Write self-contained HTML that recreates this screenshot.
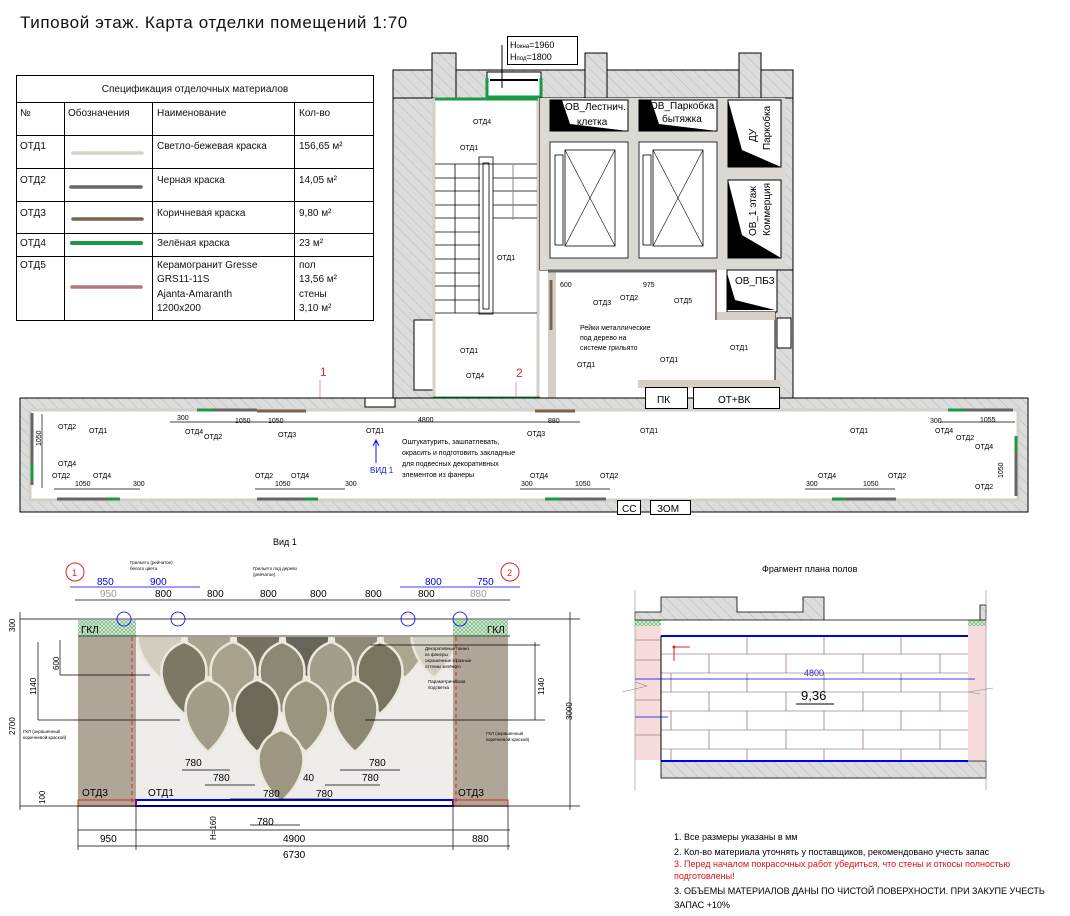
<!DOCTYPE html>
<html><head><meta charset="utf-8">
<style>
html,body{margin:0;padding:0;background:#fff;}
svg{display:block;}
text{font-family:"Liberation Sans","DejaVu Sans",sans-serif;}
</style></head>
<body>
<svg width="1070" height="916" viewBox="0 0 1070 916" xmlns="http://www.w3.org/2000/svg">
<defs>
<pattern id="h" width="8" height="8" patternUnits="userSpaceOnUse" patternTransform="rotate(-45)">
<rect width="8" height="8" fill="#dcdcdc"/><line x1="0" y1="0" x2="0" y2="8" stroke="#a8a8a8" stroke-width="0.7"/>
</pattern>
<pattern id="g" width="4" height="4" patternUnits="userSpaceOnUse">
<rect width="4" height="4" fill="#cfe8cf"/><path d="M0 0L4 4M4 0L0 4" stroke="#4a9a5a" stroke-width="0.5"/>
</pattern>
<clipPath id="lc"><rect x="136" y="637" width="317" height="169"/></clipPath>
<path id="L" d="M0 0C30 10 30 45 0 72C-30 45-30 10 0 0Z"/>
</defs>

<text x="20" y="28" font-size="17" fill="#111" letter-spacing="0.6">Типовой этаж. Карта отделки помещений 1:70</text>

<!-- TABLE -->
<g stroke="#000" stroke-width="1" fill="none">
<rect x="16.5" y="75.5" width="357" height="245"/>
<line x1="16" y1="102.5" x2="373" y2="102.5"/>
<line x1="16" y1="135.5" x2="373" y2="135.5"/>
<line x1="16" y1="168.5" x2="373" y2="168.5"/>
<line x1="16" y1="201.5" x2="373" y2="201.5"/>
<line x1="16" y1="233.5" x2="373" y2="233.5"/>
<line x1="16" y1="256.5" x2="373" y2="256.5"/>
<line x1="64.5" y1="102" x2="64.5" y2="320"/>
<line x1="152.5" y1="102" x2="152.5" y2="320"/>
<line x1="294.5" y1="102" x2="294.5" y2="320"/>
</g>
<g font-size="10" fill="#111">
<text x="195" y="92" text-anchor="middle">Спецификация отделочных материалов</text>
<text x="20" y="116">№</text><text x="68" y="116">Обозначения</text><text x="157" y="116">Наименование</text><text x="299" y="116">Кол-во</text>
<text x="20" y="149">ОТД1</text><text x="157" y="149">Светло-бежевая краска</text><text x="299" y="149">156,65 м²</text>
<text x="20" y="183">ОТД2</text><text x="157" y="183">Черная краска</text><text x="299" y="183">14,05 м²</text>
<text x="20" y="216">ОТД3</text><text x="157" y="216">Коричневая краска</text><text x="299" y="216">9,80 м²</text>
<text x="20" y="246">ОТД4</text><text x="157" y="246">Зелёная краска</text><text x="299" y="246">23 м²</text>
<text x="20" y="268">ОТД5</text><text x="157" y="268">Керамогранит Gresse</text><text x="157" y="282">GRS11-11S</text><text x="157" y="297">Ajanta-Amaranth</text><text x="157" y="311">1200x200</text>
<text x="299" y="268">пол</text><text x="299" y="282">13,56 м²</text><text x="299" y="297">стены</text><text x="299" y="311">3,10 м²</text>
</g>
<g stroke-linecap="round" stroke-width="3.5">
<line x1="73" y1="153" x2="142" y2="153" stroke="#d8d2cc"/>
<line x1="71" y1="187" x2="141" y2="187" stroke="#666"/>
<line x1="73" y1="219" x2="142" y2="219" stroke="#7a6450"/>
<line x1="72" y1="243" x2="141" y2="243" stroke="#1a9a45" stroke-width="4"/>
<line x1="72" y1="287" x2="141" y2="287" stroke="#b07878"/>
</g>

<!-- TOP BUILDING -->
<rect x="393" y="70" width="400" height="28" fill="url(#h)" stroke="#000"/>
<rect x="432" y="53" width="24" height="45" fill="url(#h)" stroke="#000"/>
<rect x="585" y="53" width="22" height="45" fill="url(#h)" stroke="#000"/>
<rect x="739" y="53" width="22" height="45" fill="url(#h)" stroke="#000"/>
<rect x="487" y="72" width="54" height="26" fill="#fff" stroke="#000"/>
<line x1="490" y1="80" x2="538" y2="80" stroke="#000" stroke-width="2"/>
<path d="M487 78V97H541V78" fill="none" stroke="#1a9a45" stroke-width="3"/>
<rect x="507.5" y="36.5" width="70" height="28" fill="#fff" stroke="#000"/>
<text x="510" y="48" font-size="9">H<tspan font-size="6">окна</tspan>=1960</text>
<text x="510" y="60" font-size="9">H<tspan font-size="6">под</tspan>=1800</text>
<line x1="502" y1="45" x2="502" y2="88" stroke="#000"/>
<rect x="393" y="98" width="42" height="300" fill="url(#h)" stroke="#000"/>
<rect x="414" y="320" width="20" height="70" fill="#fff" stroke="#000"/>
<rect x="435" y="98" width="104" height="300" fill="#fff"/>
<line x1="434" y1="98" x2="434" y2="398" stroke="#d5cfc8" stroke-width="3"/>
<line x1="538" y1="98" x2="538" y2="398" stroke="#d5cfc8" stroke-width="3"/>
<line x1="435" y1="99" x2="538" y2="99" stroke="#1a9a45" stroke-width="3"/>
<line x1="433" y1="398" x2="540" y2="398" stroke="#1a9a45" stroke-width="3"/>
<g stroke="#000" stroke-width="0.8">
<line x1="435" y1="164" x2="537" y2="164"/><line x1="435" y1="178" x2="480" y2="178"/><line x1="435" y1="191" x2="480" y2="191"/><line x1="435" y1="205" x2="480" y2="205"/><line x1="435" y1="218" x2="480" y2="218"/><line x1="435" y1="232" x2="480" y2="232"/><line x1="435" y1="245" x2="480" y2="245"/><line x1="435" y1="259" x2="480" y2="259"/><line x1="435" y1="273" x2="480" y2="273"/><line x1="435" y1="286" x2="480" y2="286"/><line x1="435" y1="300" x2="480" y2="300"/><line x1="435" y1="313" x2="537" y2="313"/>
<line x1="455" y1="164" x2="455" y2="313"/>
<rect x="479" y="157" width="14" height="157" fill="none"/><rect x="483" y="163" width="6" height="146" fill="none"/>
<line x1="493" y1="178" x2="537" y2="178"/><line x1="493" y1="191" x2="537" y2="191"/><line x1="493" y1="205" x2="537" y2="205"/><line x1="493" y1="218" x2="537" y2="218"/>
</g>
<line x1="513" y1="165" x2="513" y2="220" stroke="#888"/>
<rect x="540" y="98" width="253" height="172" fill="url(#h)" stroke="#000"/>
<rect x="540" y="98" width="245" height="172" fill="#dcd8d3"/>
<rect x="550" y="100" width="78" height="31" fill="#fff" stroke="#000"/>
<path d="M550 100L562 100L570 124L628 131L550 131Z" fill="#000"/>
<text x="565" y="110" font-size="10">ОВ_Лестнич.</text><text x="577" y="125" font-size="10">клетка</text>
<rect x="639" y="100" width="78" height="31" fill="#fff" stroke="#000"/>
<path d="M639 100L651 100L659 124L717 131L639 131Z" fill="#000"/>
<text x="650" y="109" font-size="10">ОВ_Паркобка</text><text x="662" y="122" font-size="10">бытяжка</text>
<rect x="728" y="100" width="53" height="67" fill="#fff" stroke="#000"/>
<path d="M728 100L742 150L781 167L728 167Z" fill="#000"/>
<text transform="translate(756,142) rotate(-90)" font-size="10">ДУ</text><text transform="translate(770,150) rotate(-90)" font-size="10">Паркобка</text>
<rect x="728" y="180" width="53" height="78" fill="#fff" stroke="#000"/>
<path d="M728 180L742 235L781 258L728 258Z" fill="#000"/>
<text transform="translate(756,236) rotate(-90)" font-size="10">ОВ_1 этаж</text><text transform="translate(770,236) rotate(-90)" font-size="10">Коммерция</text>
<g fill="#fff" stroke="#000" stroke-width="0.8">
<rect x="550" y="142" width="78" height="116"/><rect x="555" y="155" width="8" height="90"/><rect x="565" y="150" width="50" height="96"/>
<rect x="639" y="142" width="78" height="116"/><rect x="643" y="155" width="8" height="90"/><rect x="653" y="150" width="50" height="96"/>
</g>
<path d="M565 150L615 246M615 150L565 246M653 150L703 246M703 150L653 246" stroke="#000" stroke-width="0.6"/>
<rect x="548" y="270" width="230" height="128" fill="#fff"/>
<rect x="548" y="270" width="8" height="128" fill="#d5cfc8"/>
<rect x="775" y="270" width="18" height="128" fill="url(#h)" stroke="#000"/>
<rect x="727" y="270" width="50" height="42" fill="#fff" stroke="#000"/>
<path d="M727 273L735 300L775 310L727 310Z" fill="#000"/>
<text x="735" y="284" font-size="10">ОВ_ПБЗ</text>
<rect x="717" y="312" width="58" height="8" fill="#d5cfc8"/>
<rect x="777" y="318" width="14" height="30" fill="#fff" stroke="#000"/>
<line x1="548" y1="271" x2="717" y2="271" stroke="#666" stroke-width="3"/>
<line x1="716" y1="272" x2="716" y2="320" stroke="#b07070" stroke-width="2"/>
<line x1="551" y1="280" x2="551" y2="330" stroke="#7a6450" stroke-width="3"/>
<rect x="638" y="380" width="142" height="8" fill="#d5cfc8"/>
<g font-size="7">
<text x="560" y="287">600</text><text x="643" y="287">975</text>
<text x="593" y="305">ОТД3</text><text x="620" y="300">ОТД2</text><text x="674" y="303">ОТД5</text>
<text x="580" y="330">Рейки металлические</text><text x="580" y="340">под дерево на</text><text x="580" y="350">системе грильято</text>
<text x="730" y="350">ОТД1</text><text x="577" y="367">ОТД1</text><text x="660" y="362">ОТД1</text>
<text x="473" y="124">ОТД4</text><text x="460" y="150">ОТД1</text><text x="497" y="260">ОТД1</text><text x="460" y="353">ОТД1</text><text x="466" y="378">ОТД4</text>
</g>
<text x="516" y="377" font-size="12" fill="#d03030">2</text>
<text x="320" y="376" font-size="12" fill="#d03030">1</text>
<path d="M320 380V405M516 382V410" stroke="#e08080" stroke-width="0.8"/>

<!-- CORRIDOR -->
<rect x="20" y="398" width="1008" height="114" fill="url(#h)" stroke="#000"/>
<rect x="30" y="410" width="988" height="90" fill="#fff"/>
<path d="M30 410H1018V500H30Z" fill="none" stroke="#d5cfc8" stroke-width="3"/>
<rect x="365" y="398" width="30" height="9" fill="#fff" stroke="#000"/>
<rect x="645.5" y="387.5" width="42" height="21" fill="#fff" stroke="#000"/>
<text x="657" y="403" font-size="10">ПК</text>
<rect x="693.5" y="387.5" width="86" height="21" fill="#fff" stroke="#000"/>
<text x="718" y="403" font-size="10">ОТ+ВК</text>
<line x1="32" y1="413" x2="32" y2="485" stroke="#666" stroke-width="3"/>
<line x1="32" y1="463" x2="32" y2="480" stroke="#1a9a45" stroke-width="3"/>
<line x1="1016" y1="436" x2="1016" y2="496" stroke="#666" stroke-width="3"/>
<line x1="1016" y1="436" x2="1016" y2="452" stroke="#1a9a45" stroke-width="3"/>
<g stroke-width="3">
<line x1="205" y1="410" x2="257" y2="410" stroke="#666"/><line x1="197" y1="410" x2="213" y2="410" stroke="#1a9a45"/>
<line x1="257" y1="411" x2="306" y2="411" stroke="#7a6450"/>
<line x1="535" y1="411" x2="575" y2="411" stroke="#7a6450"/>
<line x1="950" y1="410" x2="1013" y2="410" stroke="#666"/><line x1="948" y1="410" x2="963" y2="410" stroke="#1a9a45"/>
<line x1="57" y1="499" x2="107" y2="499" stroke="#666"/><line x1="107" y1="499" x2="120" y2="499" stroke="#1a9a45"/>
<line x1="257" y1="499" x2="305" y2="499" stroke="#666"/><line x1="305" y1="499" x2="318" y2="499" stroke="#1a9a45"/>
<line x1="545" y1="499" x2="560" y2="499" stroke="#1a9a45"/><line x1="560" y1="499" x2="606" y2="499" stroke="#666"/>
<line x1="832" y1="499" x2="846" y2="499" stroke="#1a9a45"/><line x1="846" y1="499" x2="896" y2="499" stroke="#666"/>
</g>
<rect x="617.5" y="500.5" width="23" height="14" fill="#fff" stroke="#000"/><text x="622" y="512" font-size="10">СС</text>
<rect x="650.5" y="500.5" width="40" height="14" fill="#fff" stroke="#000"/><text x="657" y="512" font-size="10">ЗОМ</text>
<g stroke="#000" stroke-width="0.7">
<line x1="170" y1="422" x2="580" y2="422"/><line x1="940" y1="422" x2="1015" y2="422"/>
<line x1="54" y1="489" x2="140" y2="489"/><line x1="255" y1="489" x2="345" y2="489"/><line x1="520" y1="489" x2="610" y2="489"/><line x1="805" y1="489" x2="895" y2="489"/>
<line x1="42" y1="414" x2="42" y2="488"/>
</g>
<g font-size="7">
<text x="58" y="429">ОТД2</text><text x="89" y="433">ОТД1</text><text x="177" y="420">300</text><text x="185" y="434">ОТД4</text><text x="204" y="439">ОТД2</text><text x="235" y="423">1050</text><text x="268" y="423">1050</text><text x="278" y="437">ОТД3</text><text x="418" y="422">4800</text><text x="366" y="433">ОТД1</text>
<text x="548" y="423">880</text><text x="527" y="436">ОТД3</text><text x="640" y="433">ОТД1</text><text x="850" y="433">ОТД1</text><text x="930" y="423">300</text><text x="935" y="433">ОТД4</text><text x="956" y="440">ОТД2</text><text x="980" y="422">1055</text><text x="975" y="449">ОТД4</text><text x="975" y="489">ОТД2</text>
<text x="58" y="466">ОТД4</text><text x="52" y="478">ОТД2</text><text x="93" y="478">ОТД4</text><text x="75" y="486">1050</text><text x="133" y="486">300</text>
<text x="255" y="478">ОТД2</text><text x="291" y="478">ОТД4</text><text x="275" y="486">1050</text><text x="345" y="486">300</text>
<text x="530" y="478">ОТД4</text><text x="600" y="478">ОТД2</text><text x="521" y="486">300</text><text x="575" y="486">1050</text>
<text x="818" y="478">ОТД4</text><text x="888" y="478">ОТД2</text><text x="806" y="486">300</text><text x="863" y="486">1050</text>
<text x="402" y="444">Оштукатурить, зашпатлевать,</text><text x="402" y="455">окрасить и подготовить закладные</text><text x="402" y="466">для подвесных декоративных</text><text x="402" y="477">элементов из фанеры</text>
</g>
<text transform="translate(41,446) rotate(-90)" font-size="7">1050</text>
<text transform="translate(1003,478) rotate(-90)" font-size="7">1050</text>
<line x1="376" y1="440" x2="376" y2="463" stroke="#1010e0"/><path d="M373 446L376 440L379 446" fill="none" stroke="#1010e0"/>
<text x="370" y="473" font-size="8" fill="#1010e0">ВИД 1</text>

<!-- VIEW 1 -->
<text x="273" y="545" font-size="9">Вид 1</text>
<rect x="78" y="620" width="58" height="17" fill="url(#g)"/>
<rect x="453" y="620" width="55" height="17" fill="url(#g)"/>
<text x="81" y="633" font-size="10">ГКЛ</text><text x="487" y="633" font-size="10">ГКЛ</text>
<rect x="78" y="637" width="58" height="170" fill="#b0a697"/>
<rect x="453" y="637" width="55" height="170" fill="#b0a697"/>
<rect x="136" y="637" width="317" height="163" fill="#efedea"/>
<g stroke="#ede8dc" stroke-width="2.5" clip-path="url(#lc)">
<use href="#L" fill="#d2cdbf" transform="translate(160,606)"/>
<use href="#L" fill="#aaa48f" transform="translate(209,606)"/>
<use href="#L" fill="#757060" transform="translate(258,606)"/>
<use href="#L" fill="#68645a" transform="translate(307,606)"/>
<use href="#L" fill="#8f8a76" transform="translate(356,606)"/>
<use href="#L" fill="#aca690" transform="translate(405,606)"/>
<use href="#L" fill="#d3cfc2" transform="translate(434,606)"/>
<use href="#L" fill="#7d7866" transform="translate(184,642)"/>
<use href="#L" fill="#a7a18d" transform="translate(233,642)"/>
<use href="#L" fill="#8d8875" transform="translate(282,642)"/>
<use href="#L" fill="#a39e8b" transform="translate(331,642)"/>
<use href="#L" fill="#79745f" transform="translate(380,642)"/>
<use href="#L" fill="#a29d89" transform="translate(208,680)"/>
<use href="#L" fill="#6d6959" transform="translate(257,680)"/>
<use href="#L" fill="#9a957f" transform="translate(306,680)"/>
<use href="#L" fill="#8d8873" transform="translate(355,680)"/>
<use href="#L" fill="#9c9683" transform="translate(281,730)"/>
</g>
<rect x="136" y="800" width="317" height="6" fill="#fff" stroke="#0000ee" stroke-width="2"/>
<rect x="78" y="800" width="58" height="6" fill="none" stroke="#e02020"/>
<rect x="453" y="800" width="55" height="6" fill="none" stroke="#e02020"/>
<path d="M132 637V806M456 637V806" stroke="#e02020" stroke-dasharray="4 3"/>
<g stroke="#000" stroke-width="0.7" fill="none">
<line x1="20" y1="619" x2="580" y2="619"/><line x1="78" y1="636" x2="510" y2="636"/>
<line x1="20" y1="806" x2="580" y2="806"/>
<line x1="20" y1="612" x2="20" y2="810"/><line x1="38" y1="642" x2="38" y2="720"/><line x1="60" y1="640" x2="60" y2="675"/>
<line x1="570" y1="612" x2="570" y2="810"/><line x1="535" y1="642" x2="535" y2="720"/>
<line x1="75" y1="600" x2="510" y2="600"/>
<line x1="78" y1="830" x2="510" y2="830"/><line x1="78" y1="846" x2="510" y2="846"/>
<line x1="78" y1="806" x2="78" y2="850"/><line x1="136" y1="806" x2="136" y2="850"/><line x1="453" y1="806" x2="453" y2="850"/><line x1="508" y1="806" x2="508" y2="850"/>
<line x1="182" y1="770" x2="230" y2="770"/><line x1="205" y1="785" x2="255" y2="785"/><line x1="230" y1="799" x2="330" y2="799"/><line x1="250" y1="825" x2="300" y2="825"/>
<line x1="340" y1="770" x2="400" y2="770"/><line x1="325" y1="785" x2="380" y2="785"/>
<line x1="38" y1="720" x2="180" y2="720"/><line x1="60" y1="675" x2="150" y2="675"/>
<line x1="365" y1="720" x2="545" y2="720"/><line x1="370" y1="645" x2="540" y2="645"/>
</g>
<circle cx="75" cy="572" r="9" fill="none" stroke="#e02020"/><text x="72" y="576" font-size="9" fill="#e02020">1</text>
<circle cx="510" cy="572" r="9" fill="none" stroke="#e02020"/><text x="507" y="576" font-size="9" fill="#e02020">2</text>
<g fill="none" stroke="#0000ee" stroke-width="0.8">
<line x1="70" y1="587" x2="200" y2="587"/><line x1="400" y1="587" x2="520" y2="587"/>
<circle cx="124" cy="619" r="7"/><circle cx="178" cy="619" r="7"/><circle cx="408" cy="619" r="7"/><circle cx="460" cy="619" r="7"/>
</g>
<g font-size="10" fill="#0000ee"><text x="97" y="585">850</text><text x="150" y="585">900</text><text x="425" y="585">800</text><text x="477" y="585">750</text></g>
<g font-size="10"><text x="100" y="597" fill="#999">950</text><text x="155" y="597">800</text><text x="207" y="597">800</text><text x="260" y="597">800</text><text x="310" y="597">800</text><text x="365" y="597">800</text><text x="418" y="597">800</text><text x="470" y="597" fill="#999">880</text>
<text x="82" y="796">ОТД3</text><text x="148" y="796">ОТД1</text><text x="458" y="796">ОТД3</text>
<text x="185" y="766">780</text><text x="213" y="781">780</text><text x="263" y="797">780</text><text x="316" y="797">780</text><text x="369" y="766">780</text><text x="362" y="781">780</text><text x="257" y="825">780</text><text x="303" y="781">40</text>
<text x="100" y="842">950</text><text x="283" y="842">4900</text><text x="472" y="842">880</text><text x="283" y="858">6730</text></g>
<g font-size="8"><text transform="translate(59,670) rotate(-90)">600</text><text transform="translate(36,695) rotate(-90)">1140</text><text transform="translate(15,735) rotate(-90)">2700</text><text transform="translate(15,632) rotate(-90)">300</text><text transform="translate(45,804) rotate(-90)">100</text><text transform="translate(544,695) rotate(-90)">1140</text><text transform="translate(572,720) rotate(-90)">3000</text><text transform="translate(216,840) rotate(-90)">H=160</text></g>
<g font-size="4.5"><text x="130" y="564">Грильято (рейчатое)</text><text x="130" y="570">белого цвета</text><text x="253" y="570">Грильято под дерево</text><text x="253" y="576">(рейчатое)</text>
<text x="23" y="733">ГКЛ (окрашенный</text><text x="23" y="739">коричневой краской)</text><text x="486" y="735">ГКЛ (окрашенный</text><text x="486" y="741">коричневой краской)</text>
<text x="425" y="650">Декоративные панно</text><text x="425" y="656">из фанеры</text><text x="425" y="662">окрашенные в разные</text><text x="425" y="668">оттенки зелёного</text><text x="428" y="683">Параметрическая</text><text x="428" y="689">подсветка</text></g>

<!-- FLOOR FRAGMENT -->
<text x="762" y="572" font-size="9">Фрагмент плана полов</text>
<rect x="635" y="620" width="26" height="140" fill="#f6dcdc"/>
<rect x="968" y="620" width="18" height="140" fill="#f6dcdc"/>
<rect x="635" y="620" width="26" height="6" fill="url(#g)"/><rect x="968" y="620" width="18" height="6" fill="url(#g)"/>
<path d="M635 612H661V597H737V612H803V597H824V620H980V605H986V620H635Z" fill="url(#h)" stroke="#000" stroke-width="0.8"/>
<rect x="661" y="761" width="325" height="17" fill="url(#h)" stroke="#000" stroke-width="0.8"/>
<rect x="661" y="636" width="307" height="125" fill="#fff"/>
<g stroke="#7a5050" stroke-width="0.6">
<line x1="661" y1="654" x2="968" y2="654"/><line x1="661" y1="673" x2="968" y2="673"/><line x1="661" y1="692" x2="968" y2="692"/><line x1="661" y1="711" x2="968" y2="711"/><line x1="661" y1="730" x2="968" y2="730"/><line x1="661" y1="749" x2="968" y2="749"/>
<line x1="747" y1="636" x2="747" y2="654"/><line x1="824" y1="636" x2="824" y2="654"/><line x1="901" y1="636" x2="901" y2="654"/>
<line x1="709" y1="654" x2="709" y2="673"/><line x1="786" y1="654" x2="786" y2="673"/><line x1="863" y1="654" x2="863" y2="673"/><line x1="940" y1="654" x2="940" y2="673"/>
<line x1="671" y1="673" x2="671" y2="692"/><line x1="747" y1="673" x2="747" y2="692"/><line x1="824" y1="673" x2="824" y2="692"/><line x1="901" y1="673" x2="901" y2="692"/>
<line x1="709" y1="692" x2="709" y2="711"/><line x1="786" y1="692" x2="786" y2="711"/><line x1="863" y1="692" x2="863" y2="711"/><line x1="940" y1="692" x2="940" y2="711"/>
<line x1="671" y1="711" x2="671" y2="730"/><line x1="747" y1="711" x2="747" y2="730"/><line x1="824" y1="711" x2="824" y2="730"/><line x1="901" y1="711" x2="901" y2="730"/>
<line x1="709" y1="730" x2="709" y2="749"/><line x1="786" y1="730" x2="786" y2="749"/><line x1="863" y1="730" x2="863" y2="749"/><line x1="940" y1="730" x2="940" y2="749"/>
<line x1="671" y1="749" x2="671" y2="761"/><line x1="747" y1="749" x2="747" y2="761"/><line x1="824" y1="749" x2="824" y2="761"/><line x1="901" y1="749" x2="901" y2="761"/>
<line x1="635" y1="640" x2="661" y2="640"/><line x1="635" y1="660" x2="661" y2="660"/><line x1="635" y1="700" x2="661" y2="700"/><line x1="635" y1="735" x2="661" y2="735"/>
</g>
<path d="M661 636H968M661 761H968" stroke="#0000ee" stroke-width="2"/>
<path d="M661 636V761" stroke="#000"/>
<path d="M635 679H975M635 717H668" stroke="#0000ee" stroke-width="0.8"/>
<path d="M622 692L647 686L635 682" fill="none" stroke="#888" stroke-width="0.6"/>
<path d="M993 688L968 692L980 694" fill="none" stroke="#888" stroke-width="0.6"/>
<text x="804" y="676" font-size="9" fill="#3030c0">4800</text>
<text x="801" y="700" font-size="13">9,36</text><line x1="796" y1="704" x2="834" y2="704" stroke="#000"/>
<path d="M674 647H690M674 647V661" stroke="#e02020"/><circle cx="674" cy="647" r="1.5" fill="#e02020"/>
<path d="M635 590V790M986 590V790" stroke="#888" stroke-width="0.6"/>

<!-- NOTES -->
<g font-size="9">
<text x="674" y="840">1. Все размеры указаны в мм</text>
<text x="674" y="855">2. Кол-во материала уточнять у поставщиков, рекомендовано учесть запас</text>
<text x="674" y="867" fill="#e01010">3. Перед началом покрасочных работ убедиться, что стены и откосы полностью</text>
<text x="674" y="879" fill="#e01010">подготовлены!</text>
<text x="674" y="894">3. ОБЪЕМЫ МАТЕРИАЛОВ ДАНЫ ПО ЧИСТОЙ ПОВЕРХНОСТИ. ПРИ ЗАКУПЕ УЧЕСТЬ</text>
<text x="674" y="908">ЗАПАС +10%</text>
</g>
</svg>
</body></html>
